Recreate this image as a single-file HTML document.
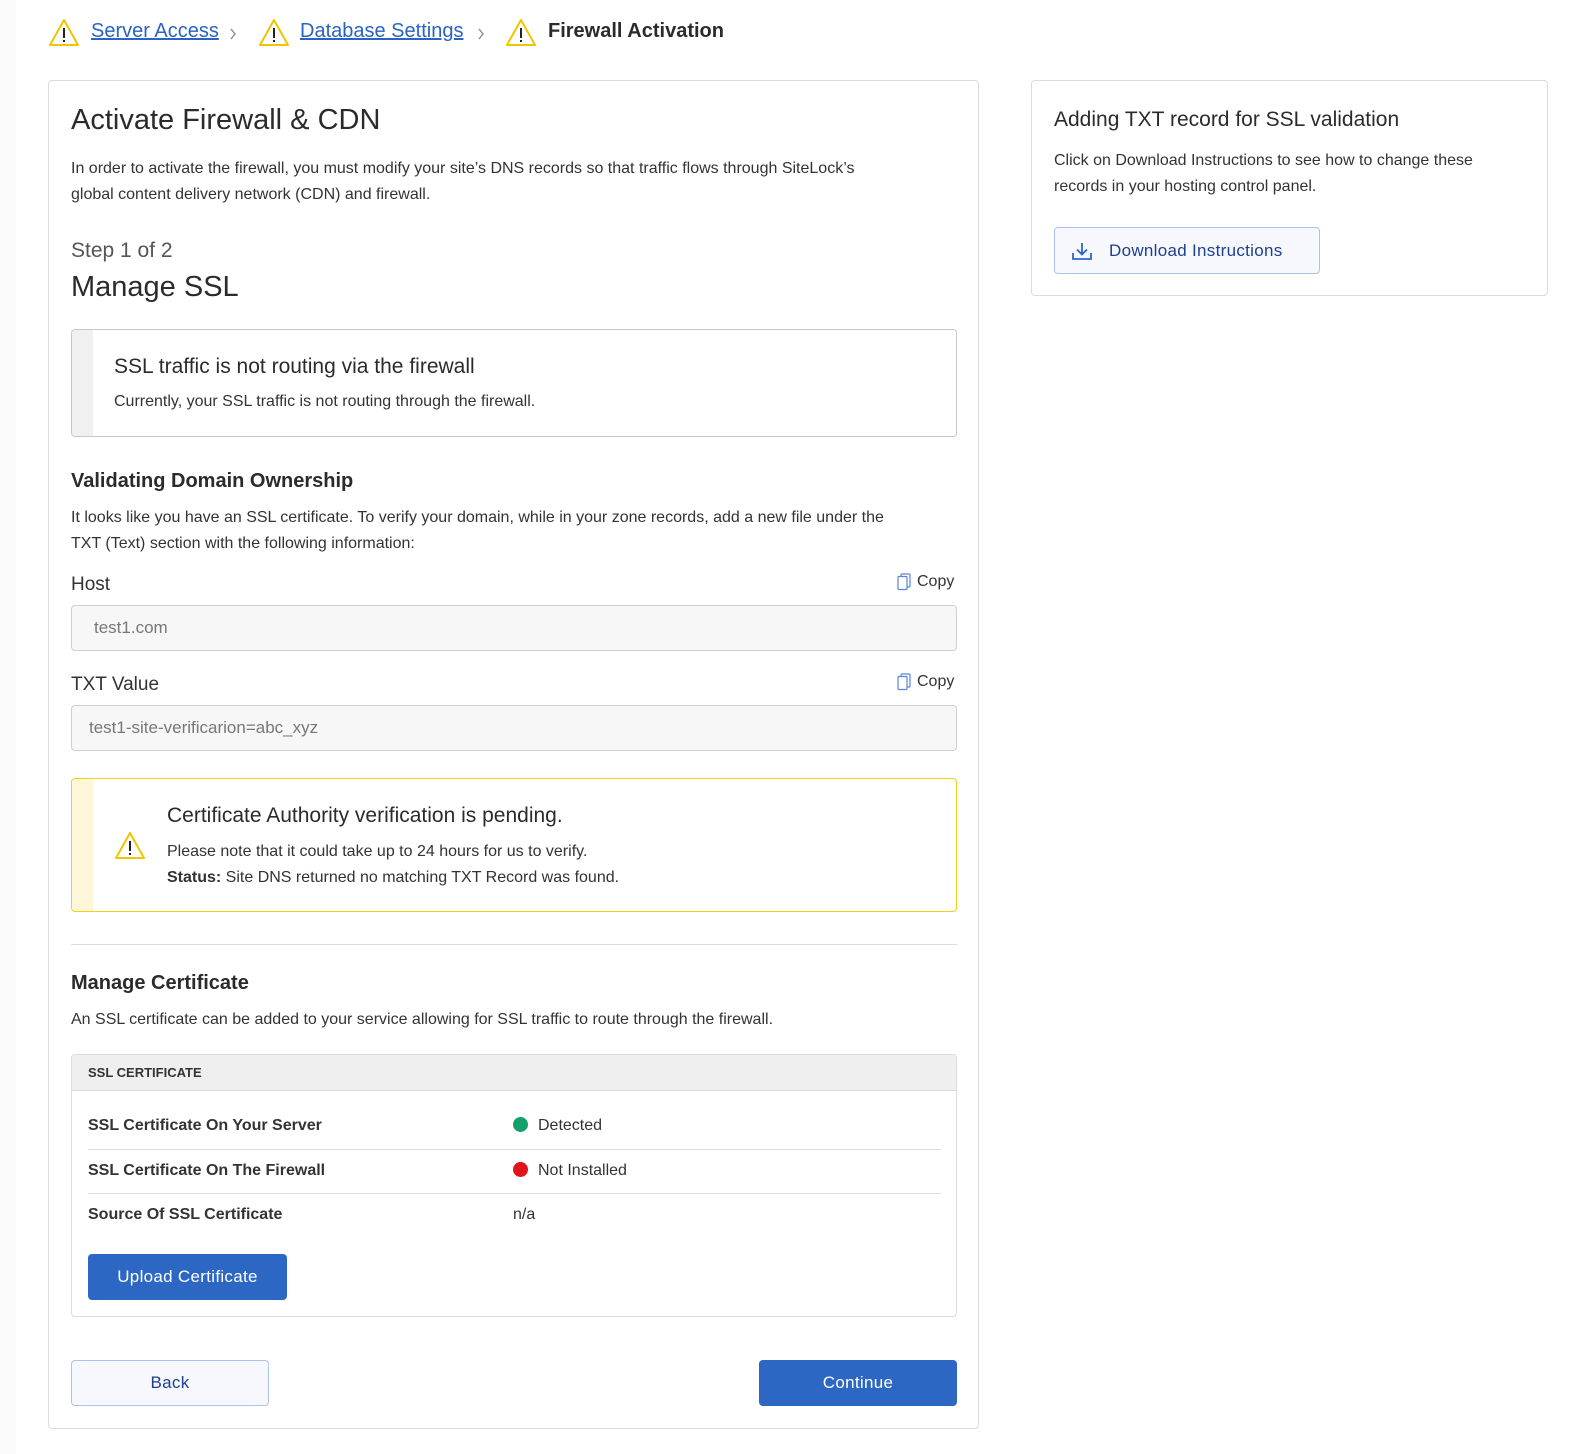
<!DOCTYPE html>
<html><head><meta charset="utf-8">
<style>
*{box-sizing:border-box;margin:0;padding:0}
body{width:1584px;height:1454px;background:#fff;font-family:"Liberation Sans",sans-serif;color:#2b2b2b;position:relative;overflow:hidden}
.abs{position:absolute}
.strip{left:0;top:0;width:16px;height:1454px;background:#fafafa}
a{color:#2a63c4;text-decoration:underline}
.card{border:1px solid #dcdcdc;border-radius:4px;background:#fff}
.p{font-size:16px;line-height:26px;color:#333}
.h2{font-size:20px;font-weight:bold;color:#2b2b2b}
.input{border:1px solid #cfcfcf;border-radius:4px;background:#f7f7f7;font-size:17px;color:#777;padding-left:17px;line-height:44px;height:46px}
.copy{font-size:16px;color:#333;display:flex;align-items:center;gap:6px}
.row{font-size:16px;font-weight:bold;color:#333}
.dot{width:15px;height:15px;border-radius:50%;display:inline-block;vertical-align:-2px;margin-right:10px}
.btn{border-radius:4px;font-size:17px;display:flex;align-items:center;justify-content:center;letter-spacing:.3px}
</style></head><body>
<div class="abs strip"></div>

<svg class="abs" style="left:48px;top:18px" width="32" height="29" viewBox="0 0 32 29"><path d="M16 2 L30 27 H2 Z" fill="none" stroke="#f2c400" stroke-width="2" stroke-linejoin="round"/><rect x="15" y="10" width="2" height="10" fill="#222"/><rect x="15" y="22" width="2" height="2" fill="#222"/></svg>
<a class="abs" style="left:91px;top:20px;font-size:20px">Server Access</a>
<svg class="abs" style="left:228px;top:27px" width="10" height="14" viewBox="0 0 10 14"><path d="M3 2 L7 7 L3 12" fill="none" stroke="#888" stroke-width="1.4"/></svg>
<svg class="abs" style="left:258px;top:18px" width="32" height="29" viewBox="0 0 32 29"><path d="M16 2 L30 27 H2 Z" fill="none" stroke="#f2c400" stroke-width="2" stroke-linejoin="round"/><rect x="15" y="10" width="2" height="10" fill="#222"/><rect x="15" y="22" width="2" height="2" fill="#222"/></svg>
<a class="abs" style="left:300px;top:20px;font-size:20px">Database Settings</a>
<svg class="abs" style="left:476px;top:27px" width="10" height="14" viewBox="0 0 10 14"><path d="M3 2 L7 7 L3 12" fill="none" stroke="#888" stroke-width="1.4"/></svg>
<svg class="abs" style="left:505px;top:18px" width="32" height="29" viewBox="0 0 32 29"><path d="M16 2 L30 27 H2 Z" fill="none" stroke="#f2c400" stroke-width="2" stroke-linejoin="round"/><rect x="15" y="10" width="2" height="10" fill="#222"/><rect x="15" y="22" width="2" height="2" fill="#222"/></svg>
<div class="abs" style="left:548px;top:20px;font-size:20px;font-weight:bold;color:#2b2b2b">Firewall Activation</div>

<div class="abs card" style="left:48px;top:80px;width:931px;height:1349px"></div>
<div class="abs" style="left:71px;top:104px;font-size:29px;color:#2b2b2b">Activate Firewall &amp; CDN</div>
<div class="abs p" style="left:71px;top:156px;width:880px">In order to activate the firewall, you must modify your site’s DNS records so that traffic flows through SiteLock’s<br>global content delivery network (CDN) and firewall.</div>
<div class="abs" style="left:71px;top:239px;font-size:21px;color:#555">Step 1 of 2</div>
<div class="abs" style="left:71px;top:271px;font-size:29px;color:#2b2b2b">Manage SSL</div>

<div class="abs" style="left:71px;top:329px;width:886px;height:108px;border:1px solid #c8c8c8;border-radius:4px;overflow:hidden">
 <div style="position:absolute;left:0;top:0;width:21px;height:100%;background:#f0f0f0"></div>
 <div style="position:absolute;left:42px;top:25px;font-size:21px;color:#2b2b2b">SSL traffic is not routing via the firewall</div>
 <div style="position:absolute;left:42px;top:63px;font-size:16px;color:#333">Currently, your SSL traffic is not routing through the firewall.</div>
</div>

<div class="abs h2" style="left:71px;top:470px">Validating Domain Ownership</div>
<div class="abs p" style="left:71px;top:505px;width:880px">It looks like you have an SSL certificate. To verify your domain, while in your zone records, add a new file under the<br>TXT (Text) section with the following information:</div>

<div class="abs" style="left:71px;top:574px;font-size:19px;color:#333">Host</div>
<div class="abs copy" style="left:897px;top:573px"><svg width="14" height="18" viewBox="0 0 14 18"><rect x="4" y="1" width="9" height="13" rx="1" fill="none" stroke="#5a85d6" stroke-width="1.2"/><rect x="1" y="3.5" width="9" height="13" rx="1" fill="#fff" stroke="#5a85d6" stroke-width="1.2"/></svg>Copy</div>
<div class="abs input" style="left:71px;top:605px;width:886px;padding-left:22px">test1.com</div>

<div class="abs" style="left:71px;top:674px;font-size:19px;color:#333">TXT Value</div>
<div class="abs copy" style="left:897px;top:673px"><svg width="14" height="18" viewBox="0 0 14 18"><rect x="4" y="1" width="9" height="13" rx="1" fill="none" stroke="#5a85d6" stroke-width="1.2"/><rect x="1" y="3.5" width="9" height="13" rx="1" fill="#fff" stroke="#5a85d6" stroke-width="1.2"/></svg>Copy</div>
<div class="abs input" style="left:71px;top:705px;width:886px">test1-site-verificarion=abc_xyz</div>

<div class="abs" style="left:71px;top:778px;width:886px;height:134px;border:1px solid #f2cf1a;border-radius:4px;overflow:hidden">
 <div style="position:absolute;left:0;top:0;width:21px;height:100%;background:#fdf6d8"></div>
 <svg style="position:absolute;left:42px;top:52px" width="32" height="29" viewBox="0 0 32 29"><path d="M16 2 L30 27 H2 Z" fill="none" stroke="#f2c400" stroke-width="2" stroke-linejoin="round"/><rect x="15" y="10" width="2" height="10" fill="#222"/><rect x="15" y="22" width="2" height="2" fill="#222"/></svg>
 <div style="position:absolute;left:95px;top:25px;font-size:21px;color:#2b2b2b">Certificate Authority verification is pending.</div>
 <div style="position:absolute;left:95px;top:60px;font-size:16px;line-height:26px;color:#333">Please note that it could take up to 24 hours for us to verify.<br><b>Status:</b> Site DNS returned no matching TXT Record was found.</div>
</div>

<div class="abs" style="left:71px;top:944px;width:886px;height:1px;background:#dcdcdc"></div>

<div class="abs h2" style="left:71px;top:972px">Manage Certificate</div>
<div class="abs p" style="left:71px;top:1007px">An SSL certificate can be added to your service allowing for SSL traffic to route through the firewall.</div>

<div class="abs" style="left:71px;top:1054px;width:886px;height:263px;border:1px solid #dcdcdc;border-radius:4px;overflow:hidden">
 <div style="height:36px;background:#efefef;border-bottom:1px solid #dcdcdc;font-size:13px;font-weight:bold;color:#333;padding-left:16px;line-height:36px">SSL CERTIFICATE</div>
</div>
<div class="abs row" style="left:88px;top:1117px">SSL Certificate On Your Server</div>
<div class="abs" style="left:513px;top:1117px;font-size:16px;color:#333"><span class="dot" style="background:#14a06a"></span>Detected</div>
<div class="abs" style="left:88px;top:1149px;width:853px;height:1px;background:#dcdcdc"></div>
<div class="abs row" style="left:88px;top:1162px">SSL Certificate On The Firewall</div>
<div class="abs" style="left:513px;top:1162px;font-size:16px;color:#333"><span class="dot" style="background:#e0141a"></span>Not Installed</div>
<div class="abs" style="left:88px;top:1193px;width:853px;height:1px;background:#dcdcdc"></div>
<div class="abs row" style="left:88px;top:1206px">Source Of SSL Certificate</div>
<div class="abs" style="left:513px;top:1206px;font-size:16px;color:#333">n/a</div>
<div class="abs btn" style="left:88px;top:1254px;width:199px;height:46px;background:#2d67c4;color:#fff">Upload Certificate</div>

<div class="abs btn" style="left:71px;top:1360px;width:198px;height:46px;background:#f6f8fe;border:1px solid #a9c2ee;color:#1d3f8f">Back</div>
<div class="abs btn" style="left:759px;top:1360px;width:198px;height:46px;background:#2d67c4;color:#fff">Continue</div>

<div class="abs card" style="left:1031px;top:80px;width:517px;height:216px"></div>
<div class="abs" style="left:1054px;top:108px;font-size:21px;color:#2b2b2b">Adding TXT record for SSL validation</div>
<div class="abs p" style="left:1054px;top:148px;width:470px">Click on Download Instructions to see how to change these records in your hosting control panel.</div>
<div class="abs btn" style="left:1054px;top:227px;width:266px;height:47px;background:#f6f8fe;border:1px solid #a9c2ee;color:#1d3f8f;justify-content:flex-start;padding-left:16px">
 <svg width="22" height="20" viewBox="0 0 22 20" style="margin-right:16px"><path d="M11 2 V13 M6 8.5 L11 13.5 L16 8.5 M2 12 V18 H20 V12" fill="none" stroke="#2d67c4" stroke-width="1.8"/></svg>Download Instructions</div>
</body></html>
